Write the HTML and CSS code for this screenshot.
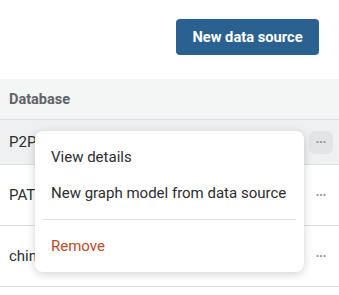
FILE: index.html
```html
<!DOCTYPE html>
<html lang="en">
<head>
    <meta charset="UTF-8">
    <meta name="viewport" content="width=device-width, initial-scale=1.0">
    <title>Data sources</title>
    <link rel="stylesheet" href="styles.css">
</head>
<body>
    <div class="toolbar">
        <button class="primary-button">New data source</button>
    </div>

    <div class="table">
        <div class="table-head">Database</div>
        <div class="row row-active">
            <span class="cell-name">P2P</span>
            <button class="more-button">&middot;&middot;&middot;</button>
        </div>
        <div class="row row-tall">
            <span class="cell-name">PATENTS</span>
            <button class="more-button">&middot;&middot;&middot;</button>
        </div>
        <div class="row row-tall">
            <span class="cell-name">chinook</span>
            <button class="more-button">&middot;&middot;&middot;</button>
        </div>

        <div class="menu">
            <div class="menu-item">View details</div>
            <div class="menu-item">New graph model from data source</div>
            <div class="menu-divider"></div>
            <div class="menu-item danger">Remove</div>
        </div>
    </div>
</body>
</html>
```

FILE: styles.css
```css
*, *::before, *::after {
	box-sizing: border-box;
}

body {
	margin: 0;
	font-family: Roboto, "Liberation Sans", sans-serif;
	color: #2b2d30;
	background: #fff;
}

.toolbar {
	display: flex;
	justify-content: flex-end;
	padding: 19px 20px 24px 0;
}

.primary-button {
	height: 36px;
	width: 143px;
	border: none;
	border-radius: 4px;
	background-color: #2a6190;
	color: #fff;
	font-family: inherit;
	font-size: 14.7px;
	font-weight: 700;
	cursor: pointer;
}

.table {
	position: relative;
}

.table-head {
	height: 41px;
	padding-left: 9px;
	display: flex;
	align-items: center;
	background-color: #f4f5f5;
	border-bottom: 1px solid #dcdee0;
	color: #606368;
	font-size: 14.5px;
	font-weight: 700;
}

.row {
	display: flex;
	align-items: center;
	justify-content: space-between;
	height: 45px;
	padding: 0 6px 0 9px;
	border-bottom: 1px solid #dcdee0;
	font-size: 15px;
}

.row-active {
	background-color: #eef0f1;
}

.row-tall {
	height: 61px;
}

.more-button {
	width: 24px;
	height: 23px;
	border: none;
	border-radius: 6px;
	background: transparent;
	color: #909396;
	font-size: 12px;
	font-weight: 700;
	letter-spacing: -0.5px;
	padding: 0;
	cursor: pointer;
}

.row-active .more-button {
	background-color: #e2e4e6;
}

.menu {
	position: absolute;
	top: 52px;
	left: 35px;
	width: 269px;
	padding: 8px 0;
	background: #fff;
	border-radius: 8px;
	box-shadow: 0 2px 10px rgba(0, 0, 0, 0.18);
}

.menu-item {
	padding: 8px 16px;
	font-size: 15px;
	color: #2b2d30;
	line-height: 20px;
}

.menu-divider {
	margin: 8px 8px;
	border-top: 1px solid #dcdee0;
}

.menu-item.danger {
	color: #bf4a2a;
}
```
